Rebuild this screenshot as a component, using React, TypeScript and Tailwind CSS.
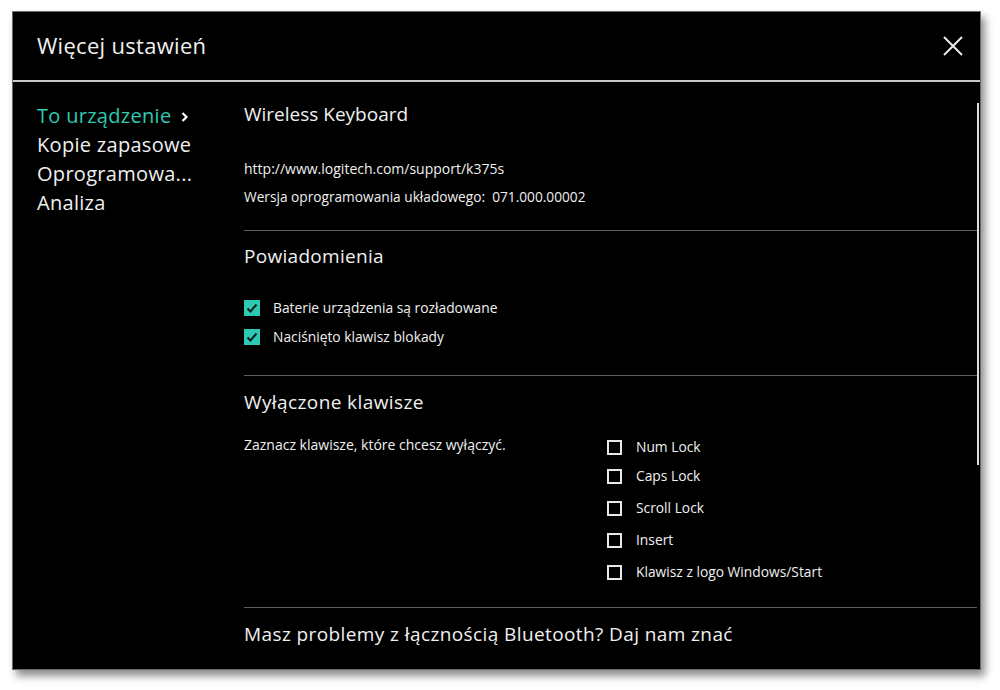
import React from "react";

// ── 小元件 ───────────────────────────────────────────

function CheckedBox() {
  return (
    <span className="w-[16px] h-[16px] bg-[#2ec9b3] flex items-center justify-center shrink-0">
      <svg width="12" height="12" viewBox="0 0 12 12" fill="none">
        <path d="M1.5 6.5 L4.5 9.5 L10.5 2.5" stroke="#0b1f1c" strokeWidth="2" />
      </svg>
    </span>
  );
}

function EmptyBox() {
  return <span className="w-[15px] h-[15px] border-[2px] border-[#e8e8e8] shrink-0" />;
}

const keys: { label: string; mt: string }[] = [
  { label: "Num Lock", mt: "mt-[0px]" },
  { label: "Caps Lock", mt: "mt-[11px]" },
  { label: "Scroll Lock", mt: "mt-[14px]" },
  { label: "Insert", mt: "mt-[14px]" },
  { label: "Klawisz z logo Windows/Start", mt: "mt-[14px]" },
];

const navItems = ["Kopie zapasowe", "Oprogramowa...", "Analiza"];

// ── 主元件 ─────────────────────────────────────────────

export default function App() {
  return (
    <div
      className="w-[1000px] h-[690px] bg-white pt-[11px] pl-[12px]"
      style={{ fontFamily: "'Open Sans', 'Noto Sans', sans-serif" }}
    >
      <div className="w-[969px] h-[659px] bg-black border border-[#6a6a6a] shadow-[4px_6px_8px_rgba(0,0,0,0.45)] flex flex-col text-[#f0f0f0]">
        {/* 標頭 */}
        <div className="h-[70px] flex items-center justify-between pl-[24px] pr-[16px] border-b-[2px] border-[#c8c8c8]">
          <span className="text-[22px] leading-[28px] tracking-[0.3px] pb-[2px]">Więcej ustawień</span>
          <svg width="22" height="22" viewBox="0 0 22 22" className="mb-[1px]">
            <path d="M2 2 L20 20 M20 2 L2 20" stroke="#eaeaea" strokeWidth="2" />
          </svg>
        </div>

        <div className="flex flex-1 min-h-0">
          {/* 側欄 */}
          <nav className="w-[231px] shrink-0 pl-[24px] pt-[19px] text-[20px] leading-[29px] tracking-[0.3px]">
            <div className="flex items-center text-[#2ec9b3]">
              To urządzenie
              <svg width="10" height="12" viewBox="0 0 10 12" className="ml-[9px] mt-[3px]">
                <path d="M2.5 2 L6.5 6 L2.5 10" stroke="#ffffff" strokeWidth="2.2" fill="none" />
              </svg>
            </div>
            {navItems.map((n) => (
              <div key={n}>{n}</div>
            ))}
          </nav>

          {/* 內容 */}
          <div className="flex-1 flex">
            <div className="flex-1 pt-[20px]">
              <div className="text-[19px] leading-[24px]">Wireless Keyboard</div>
              <div className="text-[14px] leading-[18px] mt-[34px]">http://www.logitech.com/support/k375s</div>
              <div className="text-[13.7px] leading-[18px] mt-[10px]">Wersja oprogramowania układowego:&nbsp; 071.000.00002</div>
              <div className="h-px bg-[#5e5e5e] mt-[24px]" />

              <div className="text-[19px] leading-[24px] tracking-[0.3px] mt-[13px]">Powiadomienia</div>
              <div className="mt-[32px] flex flex-col gap-[13px] text-[13.8px] leading-[16px]">
                <div className="flex items-center gap-[13px]">
                  <CheckedBox />
                  <span>Baterie urządzenia są rozładowane</span>
                </div>
                <div className="flex items-center gap-[13px]">
                  <CheckedBox />
                  <span>Naciśnięto klawisz blokady</span>
                </div>
              </div>
              <div className="h-px bg-[#5e5e5e] mt-[30px]" />

              <div className="text-[19px] leading-[24px] tracking-[0.4px] mt-[14px]">Wyłączone klawisze</div>
              <div className="flex mt-[23px]">
                <div className="w-[363px] text-[14px] leading-[16px]">Zaznacz klawisze, które chcesz wyłączyć.</div>
                <div className="flex flex-col text-[13.8px] leading-[18px] mt-[1px]">
                  {keys.map((k) => (
                    <div key={k.label} className={`flex items-center gap-[14px] ${k.mt}`}>
                      <EmptyBox />
                      <span>{k.label}</span>
                    </div>
                  ))}
                </div>
              </div>
              <div className="h-px bg-[#5e5e5e] mt-[26px]" />

              <div className="text-[19px] leading-[24px] tracking-[0.4px] mt-[14px]">
                Masz problemy z łącznością Bluetooth? Daj nam znać
              </div>
            </div>
            {/* 捲軸 */}
            <div className="w-[3px] pt-[21px] pr-[1px]">
              <div className="w-[2px] h-[362px] bg-[#dcdcdc]" />
            </div>
          </div>
        </div>
      </div>
    </div>
  );
}
